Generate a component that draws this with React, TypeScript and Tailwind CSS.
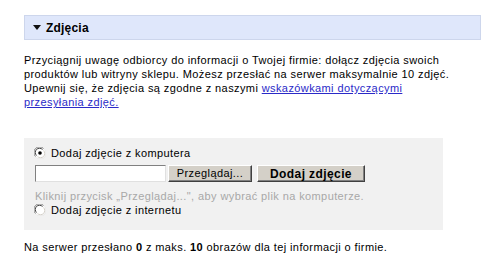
import React from 'react';

// Classic Windows-style radio button
function Radio({ checked }: { checked?: boolean }) {
  return (
    <svg width="12" height="12" viewBox="0 0 12 12" className="shrink-0">
      <circle cx="6" cy="6" r="5.5" fill="#fff" />
      <path d="M1.5 9.5 A5 5 0 0 1 9.5 1.5" fill="none" stroke="#808080" strokeWidth="1" />
      <path d="M2.5 8.5 A3.8 3.8 0 0 1 8.5 2.5" fill="none" stroke="#404040" strokeWidth="1" />
      <path d="M10.5 2.5 A5 5 0 0 1 2.5 10.5" fill="none" stroke="#e8e8e8" strokeWidth="1" />
      <path d="M9.5 3.5 A3.8 3.8 0 0 1 3.5 9.5" fill="none" stroke="#d4d0c8" strokeWidth="1" />
      {checked && <circle cx="6" cy="6" r="1.8" fill="#000" />}
    </svg>
  );
}

const btn =
  "h-[17px] bg-[#d4d0c8] border border-t-white border-l-white border-r-[#404040] border-b-[#404040] shadow-[inset_-1px_-1px_0_#808080] flex items-center justify-center leading-none text-black";

export default function App() {
  return (
    <div className="w-[500px] h-[275px] bg-white pt-[15px] pl-[24px] text-[11px] leading-[14px] tracking-[0.4px] text-black font-['Liberation_Sans',Arial,sans-serif]">
      <div className="w-[457px] h-[25px] bg-[#dfe7fb] border border-[#cdd6ec] flex items-center pl-[8px] gap-[5px]">
        <svg width="8" height="6" viewBox="0 0 8 6" className="shrink-0">
          <path d="M0 0 H8 L4 5 Z" fill="#111" />
        </svg>
        <span className="font-bold text-[12px] tracking-[0.2px]">Zdjęcia</span>
      </div>

      <p className="mt-[13px] w-[440px]">
        Przyciągnij uwagę odbiorcy do informacji o Twojej firmie: dołącz zdjęcia swoich produktów lub witryny sklepu. Możesz przesłać na serwer maksymalnie 10 zdjęć. Upewnij się, że zdjęcia są zgodne z naszymi{' '}
        <a href="#" className="text-[#2a2ac8] underline">wskazówkami dotyczącymi przesyłania zdjęć.</a>
      </p>

      <div className="mt-[29px] w-[419px] h-[92px] bg-[#f1f1f1] pt-[8px] px-[11px]">
        <label className="flex items-center gap-[5px] h-[14px] -ml-[1px]">
          <Radio checked />
          <span>Dodaj zdjęcie z komputera</span>
        </label>
        <div className="mt-[5px] flex items-center">
          <div className="w-[131px] h-[17px] bg-white border border-t-[#808080] border-l-[#808080] border-r-[#e0e0e0] border-b-[#e0e0e0]" />
          <div className={`${btn} ml-[2px] w-[84px] text-[11px]`}>Przeglądaj...</div>
          <div className={`${btn} ml-[5px] w-[108px] font-bold text-[12px]`}>Dodaj zdjęcie</div>
        </div>
        <div className="mt-[7px] text-[#a8a8a8]">Kliknij przycisk „Przeglądaj...", aby wybrać plik na komputerze.</div>
        <label className="flex items-center gap-[5px] h-[14px] -ml-[1px]">
          <Radio />
          <span>Dodaj zdjęcie z internetu</span>
        </label>
      </div>

      <p className="mt-[10px]">
        Na serwer przesłano <b>0</b> z maks. <b>10</b> obrazów dla tej informacji o firmie.
      </p>
    </div>
  );
}
